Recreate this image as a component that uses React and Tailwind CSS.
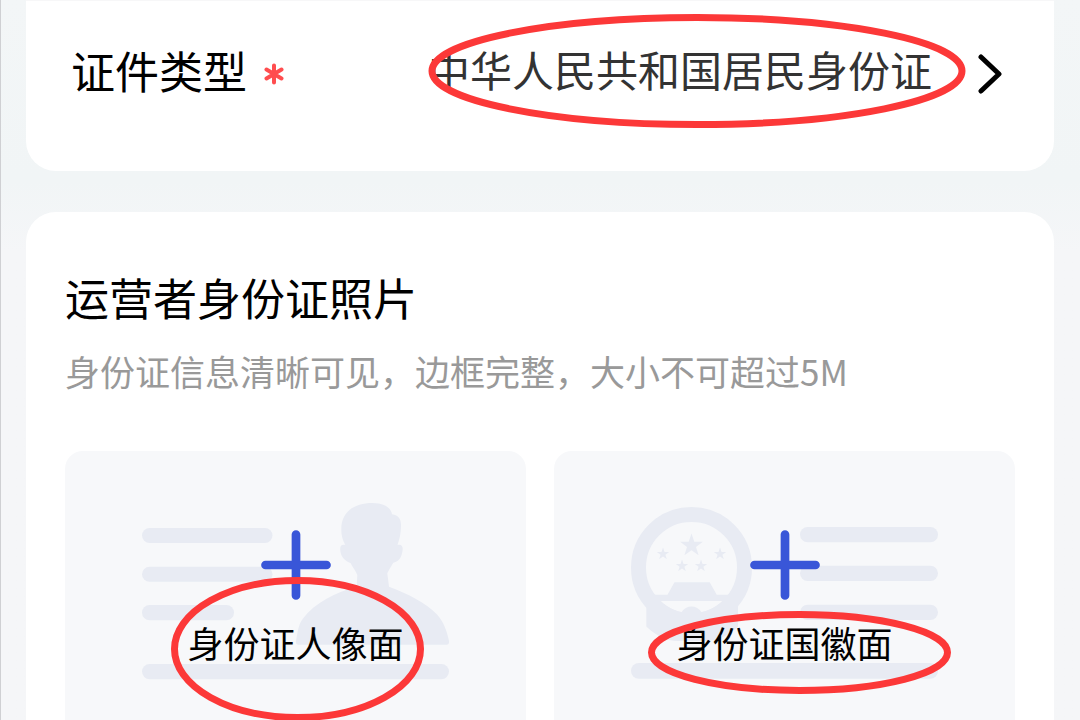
import { useState } from "react";

const STAR = "M0 -12 L2.8 -3.8 L11.4 -3.7 L4.5 1.5 L7.1 9.7 L0 4.8 L-7.1 9.7 L-4.5 1.5 L-11.4 -3.7 L-2.8 -3.8 Z";

const smallStars = [
  { x: 32, y: 51 },
  { x: 89, y: 51 },
  { x: 51, y: 63 },
  { x: 70, y: 63 },
];

function Plus() {
  return (
    <path
      d="M154 31.5V92.5M123.5 62H184.5"
      stroke="#3956d8"
      strokeWidth="8.7"
      strokeLinecap="round"
    />
  );
}

function PortraitArt() {
  return (
    <svg viewBox="0 0 307 177" className="w-full" fill="none" aria-hidden="true">
      <g fill="#e8ebf3">
        <rect x="0" y="25" width="130.5" height="15" rx="7.5" />
        <rect x="0" y="63.7" width="130.5" height="15" rx="7.5" />
        <rect x="0" y="102" width="92" height="15.3" rx="7.6" />
        <rect x="0" y="161" width="307" height="15.2" rx="7.6" />
        <path d="M199.3 27C199 8 213 0 230.3 0C243 0 249 5 250 11.3C257 12 259.3 17 259 23C259 30 257.5 36 255.5 42C260 40.5 261.5 44 260.3 49C259 56 256 58.5 251.3 59.7C248.5 64.5 246.5 67.5 245.3 70.3L247 83.7C266 91 284 99.5 295 111.5C301.5 118.5 305 128 307 138C307.3 140.5 306.5 141.7 304.5 141.7H156.5C154.5 141.7 153.7 140.5 154 138C155.5 129 156.5 121 161 115.5C173 99.5 194 89.5 214.7 83.5L215.3 72C213.5 67.5 210.5 64 208.5 60C203 58 199.5 54.5 198.5 49C197.5 43.5 199 41 203.3 42C200.5 37 199.3 32 199.3 27Z" />
      </g>
      <Plus />
    </svg>
  );
}

function EmblemArt() {
  return (
    <svg viewBox="0 0 307 177" className="w-full" fill="none" aria-hidden="true">
      <circle cx="60.5" cy="64.5" r="53" stroke="#e8ebf3" strokeWidth="15" />
      <g fill="#e8ebf3">
        <path d={STAR} transform="translate(60.5 42.5)" />
        {smallStars.map((s) => (
          <path key={`${s.x}-${s.y}`} d={STAR} transform={`translate(${s.x} ${s.y}) scale(0.54)`} />
        ))}
        <path d="M43.5 79.3H78.7L85.7 91.7H99L93 98H28L22 91.7H36.5Z" />
        <path d="M15.3 98L29 98C37 105 44 108 50.5 109.3C55 101.5 66 101.5 70.5 109.3C77 108 84 105 92 98L107 98V123.5C99 132 86 138 74 138H47C35 138 24 132 15.3 123.5Z" />
        <rect x="169" y="24" width="138" height="15.3" rx="7.6" />
        <rect x="169" y="62.7" width="138" height="15.3" rx="7.6" />
        <rect x="169" y="101.7" width="138" height="15.3" rx="7.6" />
        <rect x="0" y="160" width="307" height="15.7" rx="7.8" />
      </g>
      <Plus />
    </svg>
  );
}

function UploadTile({ label, children, mark }) {
  return (
    <button
      type="button"
      className="flex items-start justify-center rounded-t-[18px] bg-[#f7f8fa] pt-[52px] cursor-pointer"
    >
      <span className="relative block w-[307px]">
        {children}
        <span className="absolute inset-x-0 top-[115px] text-center text-[36px] leading-[48px] text-black">
          {label}
        </span>
        {mark}
      </span>
    </button>
  );
}

export default function App() {
  const [docType, setDocType] = useState("id");

  return (
    <main className="flex min-h-screen flex-col gap-[41px] overflow-hidden border-l border-[#cfd0d3] bg-linear-to-b from-[#f3f6f7] via-[#f1f5f6] via-25% to-[#f5f6f8] to-35% pr-[26px] pl-[25px] font-['Noto_Sans_CJK_SC',sans-serif]">
      {/* 证件类型 */}
      <section className="relative flex h-[171px] items-start justify-between rounded-b-[30px] border-t border-[#f7f7f8] bg-white pt-[37px] pr-[52px] pl-[45px]">
        <label htmlFor="docType" className="flex items-center gap-[17px] text-[44px] leading-[64px] text-black">
          证件类型
          <svg viewBox="0 0 20 22" className="mt-2 w-5" fill="none" aria-hidden="true">
            <path
              d="M10 2.5V19.5M2.5 6.5L17.5 15.5M17.5 6.5L2.5 15.5"
              stroke="#ff4d4f"
              strokeWidth="4"
              strokeLinecap="round"
            />
          </svg>
        </label>
        <div className="flex items-center gap-[46px]">
          <select
            id="docType"
            value={docType}
            onChange={(e) => setDocType(e.target.value)}
            className="appearance-none bg-transparent text-right text-[42px] leading-[62px] text-[#333333] outline-none"
          >
            <option value="id">中华人民共和国居民身份证</option>
          </select>
          <svg viewBox="0 0 24 40" className="mt-2.5 w-6" fill="none" aria-hidden="true">
            <path
              d="M3 3L21 20L3 37"
              stroke="#000000"
              strokeWidth="5"
              strokeLinecap="round"
              strokeLinejoin="round"
            />
          </svg>
        </div>
        <svg
          viewBox="0 0 538 114"
          className="pointer-events-none absolute top-[13px] right-[88px] w-[538px]"
          fill="none"
          aria-hidden="true"
        >
          <ellipse cx="269" cy="57" rx="265" ry="53.5" stroke="#fc3838" strokeWidth="7" />
        </svg>
      </section>

      {/* 身份证照片 */}
      <section className="flex flex-1 flex-col rounded-t-[30px] bg-white px-[39px] pt-[53px]">
        <h2 className="text-[44px] leading-[64px] text-black">运营者身份证照片</h2>
        <p className="mt-4 text-[35px] leading-[52px] text-[#999999]">
          身份证信息清晰可见，边框完整，大小不可超过5M
        </p>
        <div className="mt-[54px] grid flex-1 grid-cols-2 gap-7">
          <UploadTile
            label="身份证人像面"
            mark={
              <svg
                viewBox="0 0 253 144"
                className="pointer-events-none absolute top-[74px] left-[29px] w-[253px]"
                fill="none"
                aria-hidden="true"
              >
                <ellipse cx="126.5" cy="72" rx="123" ry="68.5" stroke="#fc3838" strokeWidth="7" />
              </svg>
            }
          >
            <PortraitArt />
          </UploadTile>
          <UploadTile
            label="身份证国徽面"
            mark={
              <svg
                viewBox="0 0 303 83"
                className="pointer-events-none absolute top-[108px] left-[17px] w-[303px]"
                fill="none"
                aria-hidden="true"
              >
                <ellipse cx="151.5" cy="41.5" rx="148" ry="38" stroke="#fc3838" strokeWidth="7" />
              </svg>
            }
          >
            <EmblemArt />
          </UploadTile>
        </div>
      </section>
    </main>
  );
}
